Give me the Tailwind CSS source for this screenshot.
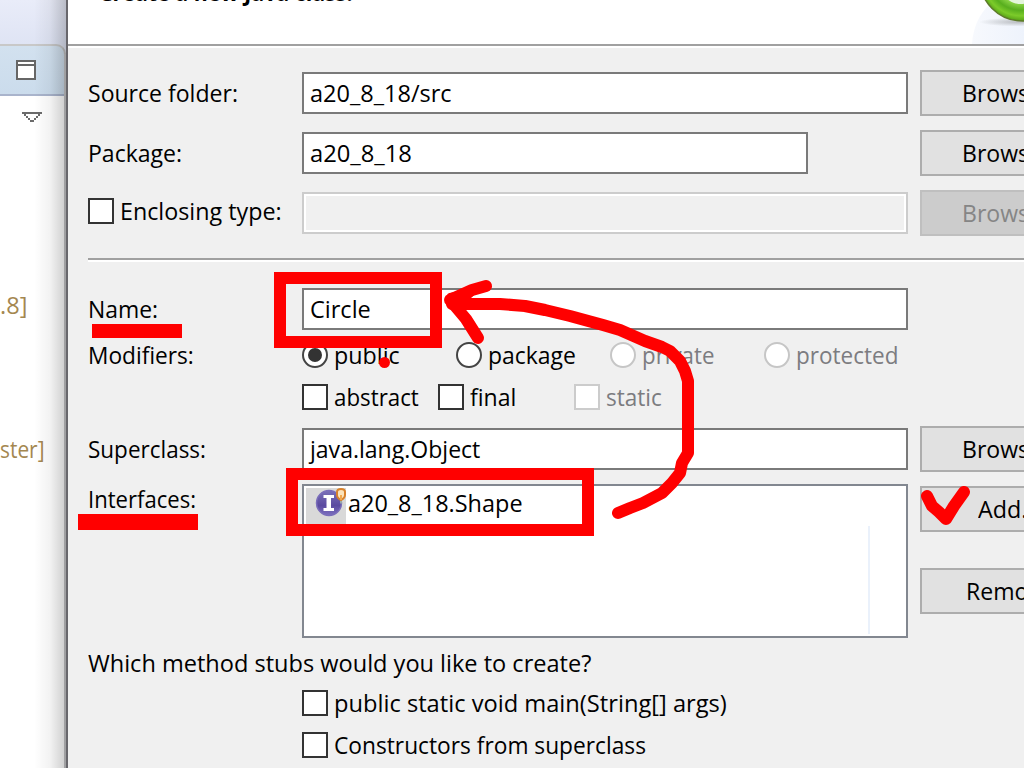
<!DOCTYPE html>
<html lang="en">
<head>
<meta charset="utf-8">
<title>New Java Class</title>
<script src="https://cdn.jsdelivr.net/npm/@tailwindcss/browser@4"></script>
</head>
<body class="w-[1024px] h-[768px] overflow-hidden bg-white">
<div class="relative flex w-[1024px] h-[768px] overflow-hidden text-[24px] leading-[30px] text-black font-['Open_Sans',sans-serif]">

  <!-- workbench strip behind the dialog -->
  <aside class="relative w-[66px] shrink-0 h-full flex flex-col bg-white">
    <div class="h-[44px] bg-linear-to-b from-[#e9ecf9] to-[#dfe4f4]"></div>
    <div class="h-[52px] bg-[#e0e4f3]">
      <div class="h-full w-[66px] rounded-tr-[10px] border-t-2 border-r-2 border-t-[#c8c8c8] border-r-[#c0c0c0] border-b-2 border-b-[#a9b4cc] bg-linear-to-b from-[#d2e1ef] to-[#cbdcec] pl-[16px] pt-[14px]">
        <svg class="block" width="20" height="20" shape-rendering="crispEdges"><rect x="1" y="1" width="18" height="18" fill="#fff" stroke="#666" stroke-width="2"/><path d="M0 5H20" stroke="#666" stroke-width="2"/></svg>
      </div>
    </div>
    <svg class="ml-[22px] mt-[16px] block" width="20" height="10" shape-rendering="crispEdges"><path d="M0 0h20v2h-2v2h-2v2h-2v2h-2v2H8V8H6V6H4V4H2V2H0z" fill="#6b6b6b"/><path d="M4 2h12v2h-2v2h-2v2H8V6H6V4H4z" fill="#fff"/></svg>
    <div class="mt-[168px] h-[30px] flex text-[#a48750]"><span class="inline-block origin-left whitespace-nowrap scale-x-[.98]">.8]</span></div>
    <div class="mt-[114px] h-[30px] flex text-[#a48750]"><span class="inline-block origin-left whitespace-nowrap scale-x-[.87]">ster]</span></div>
    <div class="absolute inset-y-0 right-0 w-[32px] bg-linear-to-r from-transparent via-black/5 to-black/20"></div>
    <div class="absolute bottom-0 top-[54px] right-0 w-[2px] bg-[#a0a0a2]"></div>
  </aside>

  <!-- dialog -->
  <main class="w-[958px] shrink-0 h-full border-l-2 border-[#68676c] bg-[#f0f0f0] flex flex-col overflow-hidden">
    <header class="relative h-[48px] shrink-0 bg-white overflow-hidden flex justify-between">
      <div class="-mt-[23px] ml-[31px] font-bold"><span class="inline-block origin-left whitespace-nowrap scale-x-[.89]">Create a new Java class.</span></div>
      <svg class="block shrink-0 absolute right-0 top-0" width="64" height="44" viewBox="960 0 64 44">
        <defs>
          <linearGradient id="disc" x1="0" x2="1"><stop offset="0" stop-color="#f7f9fd"/><stop offset="1" stop-color="#eef3fc"/></linearGradient>
          <radialGradient id="ring" gradientUnits="userSpaceOnUse" cx="1021" cy="-22" r="43"><stop offset=".58" stop-color="#8fd84a"/><stop offset=".75" stop-color="#58ae1e"/><stop offset=".88" stop-color="#7ccb2a"/><stop offset="1" stop-color="#55a016"/></radialGradient>
          <radialGradient id="sh"><stop offset="0" stop-color="#b9bcc0"/><stop offset="1" stop-color="#b9bcc0" stop-opacity="0"/></radialGradient>
        </defs>
        <path d="M972 44C973 28 979 14 990 4L1024 0V44Z" fill="url(#disc)"/>
        <ellipse cx="1019" cy="22" rx="40" ry="4.500" fill="url(#sh)"/>
        <circle cx="1022.500" cy="-22" r="43" fill="url(#ring)" stroke="#5d7a2a" stroke-width="1.500"/>
        <ellipse cx="1021" cy="-14" rx="20" ry="18" fill="#e4f5dc"/>
      </svg>
      <div class="absolute inset-x-0 bottom-[2px] h-[2px] bg-[#a0a0a0]"></div>
    </header>

    <section class="w-[1010px] pl-[20px] pt-[22px] flex flex-col shrink-0">
      <div class="flex items-center h-[46px]">
        <div class="w-[214px] shrink-0"><span class="inline-block origin-left whitespace-nowrap scale-x-[.96]">Source folder:</span></div>
        <div class="w-[606px] shrink-0 h-[42px] bg-white border-2 border-[#7a7a7a] pl-[6px] flex items-center"><span class="inline-block origin-left whitespace-nowrap scale-x-[.98]">a20_8_18/src</span></div>
        <div class="ml-[12px] w-[150px] shrink-0 h-[46px] bg-[#e1e1e1] border-2 border-[#adadad] pl-[40px] flex items-center"><span class="inline-block origin-left whitespace-nowrap scale-x-[.96]">Browse...</span></div>
      </div>
      <div class="mt-[14px] flex items-center h-[46px]">
        <div class="w-[214px] shrink-0"><span class="inline-block origin-left whitespace-nowrap scale-x-[.96]">Package:</span></div>
        <div class="w-[506px] shrink-0 h-[42px] bg-white border-2 border-[#7a7a7a] pl-[6px] flex items-center"><span class="inline-block origin-left whitespace-nowrap scale-x-[.99]">a20_8_18</span></div>
        <div class="ml-[112px] w-[150px] shrink-0 h-[46px] bg-[#e1e1e1] border-2 border-[#adadad] pl-[40px] flex items-center"><span class="inline-block origin-left whitespace-nowrap scale-x-[.96]">Browse...</span></div>
      </div>
      <div class="mt-[14px] flex items-center h-[46px]">
        <div class="w-[214px] shrink-0 flex items-center pb-[4px]"><i class="size-[26px] shrink-0 bg-white border-2 border-[#333]"></i><span class="ml-[6px] inline-block origin-left whitespace-nowrap scale-x-[.97]">Enclosing type:</span></div>
        <div class="w-[606px] shrink-0 h-[42px] bg-[#f0f0f0] border-2 border-[#ccc] inset-ring-2 inset-ring-white"></div>
        <div class="ml-[12px] w-[150px] shrink-0 h-[46px] bg-[#ccc] border-2 border-[#bfbfbf] pl-[40px] flex items-center text-[#858585]"><span class="inline-block origin-left whitespace-nowrap scale-x-[.96]">Browse...</span></div>
      </div>

      <div class="mt-[22px] h-[4px] bg-[#a0a0a0] border-b-2 border-white"></div>

      <div class="mt-[26px] flex items-center h-[42px]">
        <div class="w-[214px] shrink-0"><span class="inline-block origin-left whitespace-nowrap scale-x-[.955]">Name:</span></div>
        <div class="w-[606px] shrink-0 h-[42px] bg-white border-2 border-[#7a7a7a] pl-[6px] flex items-center"><span class="inline-block origin-left whitespace-nowrap scale-x-[.98]">Circle</span></div>
      </div>

      <div class="mt-[10px] flex items-center h-[30px]">
        <div class="w-[214px] shrink-0"><span class="inline-block origin-left whitespace-nowrap scale-x-[.945]">Modifiers:</span></div>
        <div class="w-[154px] flex items-center"><i class="size-[26px] shrink-0 rounded-full bg-white border-2 border-[#444] flex items-center justify-center"><b class="size-[14px] rounded-full bg-[#333]"></b></i><span class="ml-[6px] inline-block origin-left whitespace-nowrap scale-x-[.97]">public</span></div>
        <div class="w-[154px] flex items-center"><i class="size-[26px] shrink-0 rounded-full bg-white border-2 border-[#444]"></i><span class="ml-[6px] inline-block origin-left whitespace-nowrap scale-x-[.956]">package</span></div>
        <div class="w-[154px] flex items-center text-[#7c7c80]"><i class="size-[26px] shrink-0 rounded-full bg-white border-2 border-[#c6c6c6]"></i><span class="ml-[6px] inline-block origin-left whitespace-nowrap scale-x-[.93]">private</span></div>
        <div class="w-[154px] flex items-center text-[#7c7c80]"><i class="size-[26px] shrink-0 rounded-full bg-white border-2 border-[#c6c6c6]"></i><span class="ml-[6px] inline-block origin-left whitespace-nowrap scale-x-[.938]">protected</span></div>
      </div>
      <div class="mt-[12px] ml-[214px] flex items-center h-[30px]">
        <div class="w-[136px] flex items-center"><i class="size-[26px] shrink-0 bg-white border-2 border-[#333]"></i><span class="ml-[6px] inline-block origin-left whitespace-nowrap scale-x-[.93]">abstract</span></div>
        <div class="w-[136px] flex items-center"><i class="size-[26px] shrink-0 bg-white border-2 border-[#333]"></i><span class="ml-[6px] inline-block origin-left whitespace-nowrap scale-x-[.96]">final</span></div>
        <div class="w-[136px] flex items-center text-[#7c7c80]"><i class="size-[26px] shrink-0 bg-white border-2 border-[#ccc]"></i><span class="ml-[6px] inline-block origin-left whitespace-nowrap scale-x-[.94]">static</span></div>
      </div>

      <div class="mt-[14px] flex items-center h-[46px]">
        <div class="w-[214px] shrink-0"><span class="inline-block origin-left whitespace-nowrap scale-x-[.937]">Superclass:</span></div>
        <div class="w-[606px] shrink-0 h-[42px] bg-white border-2 border-[#7a7a7a] pl-[6px] flex items-center"><span class="inline-block origin-left whitespace-nowrap scale-x-[.96]">java.lang.Object</span></div>
        <div class="ml-[12px] w-[150px] shrink-0 h-[46px] bg-[#e1e1e1] border-2 border-[#adadad] pl-[40px] flex items-center"><span class="inline-block origin-left whitespace-nowrap scale-x-[.96]">Browse...</span></div>
      </div>

      <div class="mt-[12px] flex items-start h-[154px]">
        <div class="w-[214px] shrink-0"><span class="inline-block origin-left whitespace-nowrap scale-x-[.92]">Interfaces:</span></div>
        <div class="w-[606px] shrink-0 h-[154px] bg-white border-2 border-[#828790] flex justify-between">
          <div class="pl-[2px] pt-[2px] flex">
            <div class="w-[40px] h-[40px] bg-[#d9d9d9]">
              <svg class="block" width="40" height="40" viewBox="306 488 40 40">
                <defs><linearGradient id="orb" x1="0" y1="0" x2="0" y2="1"><stop offset="0" stop-color="#7a70b8"/><stop offset=".6" stop-color="#5a4aa0"/><stop offset="1" stop-color="#7d70c0"/></linearGradient></defs>
                <circle cx="329" cy="503" r="12.500" fill="url(#orb)" stroke="#7a6dba" stroke-width="1.500"/>
                <path d="M323.500 495h10.500v3h-3v10h3v3h-10.500v-3h3v-10h-3z" fill="#fff"/>
                <path d="M341 500v3.500" stroke="#9aa" stroke-width="2"/>
                <path d="M337 492q0-3 4-3t4 3v3q0 3-4 5q-4-2-4-5z" fill="#fbe3bb" stroke="#d9822b" stroke-width="2"/>
                <path d="M341 495v5" stroke="#f0a850" stroke-width="2"/>
              </svg>
            </div>
            <span class="ml-[2px] inline-block origin-left whitespace-nowrap scale-x-[.977]">a20_8_18.Shape</span>
          </div>
          <div class="mt-[40px] mr-[36px] w-[2px] h-[108px] bg-[#eaf1fb]"></div>
        </div>
        <div class="ml-[12px] mt-[2px] w-[150px] shrink-0 flex flex-col gap-[36px]">
          <div class="h-[46px] bg-[#e1e1e1] border-2 border-[#adadad] pl-[56px] flex items-center"><span class="inline-block origin-left whitespace-nowrap scale-x-[.97]">Add...</span></div>
          <div class="h-[46px] bg-[#e1e1e1] border-2 border-[#adadad] pl-[44px] flex items-center"><span class="inline-block origin-left whitespace-nowrap scale-x-[.96]">Remove</span></div>
        </div>
      </div>

      <div class="mt-[10px] h-[30px]"><span class="inline-block origin-left whitespace-nowrap scale-x-[.981]">Which method stubs would you like to create?</span></div>
      <div class="mt-[10px] ml-[214px] flex items-center h-[30px]"><i class="size-[26px] shrink-0 bg-white border-2 border-[#333]"></i><span class="ml-[6px] inline-block origin-left whitespace-nowrap scale-x-[.986]">public static void main(String[] args)</span></div>
      <div class="mt-[12px] ml-[214px] flex items-center h-[30px]"><i class="size-[26px] shrink-0 bg-white border-2 border-[#333]"></i><span class="ml-[6px] inline-block origin-left whitespace-nowrap scale-x-[.947]">Constructors from superclass</span></div>
    </section>
  </main>

  <!-- red pen annotations -->
  <svg class="absolute inset-0 pointer-events-none" width="1024" height="768" fill="none" stroke="#f00" stroke-width="12" stroke-linecap="round" stroke-linejoin="round">
    <path d="M280 278H436V342H280Z" stroke-linejoin="miter"/>
    <path d="M292 474H588V530H292Z" stroke-linejoin="miter"/>
    <path d="M92 324h90v14H92zM78 514h120v16H78z" fill="#f00" stroke="none"/>
    <circle cx="384.500" cy="362.500" r="5.500" fill="#f00" stroke="none"/>
    <path d="M618 513L630 508L643 503L662 493L672 483L680 473L682 463L688 453V381L685 371L680 361L670 351L662 347L645 341L620 330L603 325L570 316L545 310L525 306L500 304H452"/>
    <path d="M486 286L472 290L450 300L466 319L478 338"/>
    <path d="M450 296L474 291L466 299Z" stroke-width="6" fill="#f00"/>
    <path d="M927 496L932 506L939 512L946 519L954 506L964 492"/>
  </svg>
</div>
</body>
</html>
